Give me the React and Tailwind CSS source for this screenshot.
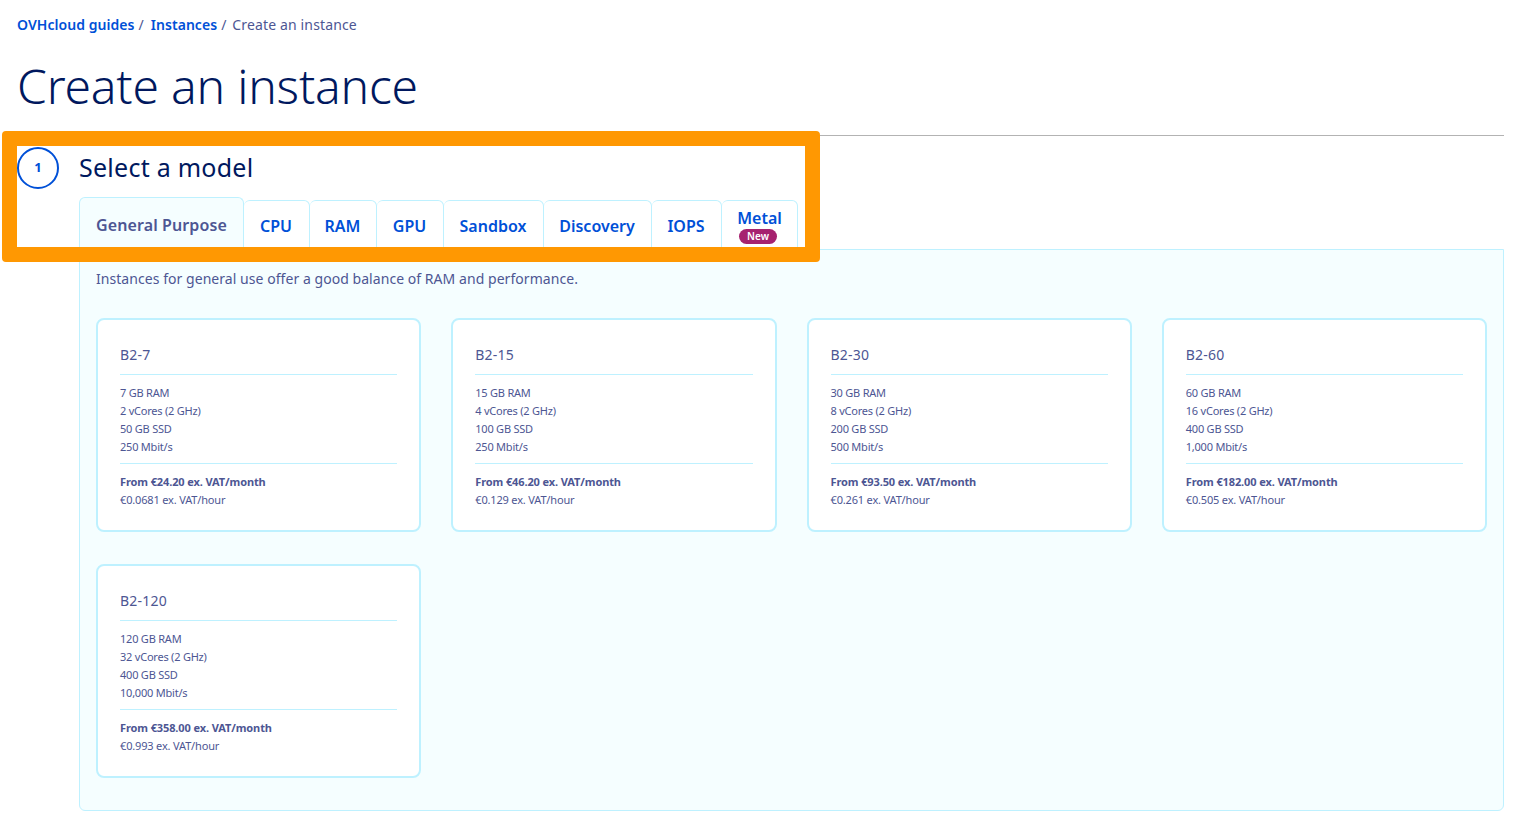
const font = { fontFamily: '"Noto Sans", "Lato", sans-serif' };

const cards = [
  ["B2-7", "7 GB RAM", "2 vCores (2 GHz)", "50 GB SSD", "250 Mbit/s", "From €24.20 ex. VAT/month", "€0.0681 ex. VAT/hour"],
  ["B2-15", "15 GB RAM", "4 vCores (2 GHz)", "100 GB SSD", "250 Mbit/s", "From €46.20 ex. VAT/month", "€0.129 ex. VAT/hour"],
  ["B2-30", "30 GB RAM", "8 vCores (2 GHz)", "200 GB SSD", "500 Mbit/s", "From €93.50 ex. VAT/month", "€0.261 ex. VAT/hour"],
  ["B2-60", "60 GB RAM", "16 vCores (2 GHz)", "400 GB SSD", "1,000 Mbit/s", "From €182.00 ex. VAT/month", "€0.505 ex. VAT/hour"],
  ["B2-120", "120 GB RAM", "32 vCores (2 GHz)", "400 GB SSD", "10,000 Mbit/s", "From €358.00 ex. VAT/month", "€0.993 ex. VAT/hour"],
];

const tabs = [
  ["CPU", "w-[66px]"],
  ["RAM", "w-[67px]"],
  ["GPU", "w-[67px]"],
  ["Sandbox", "w-[100px]"],
  ["Discovery", "w-[108px]"],
  ["IOPS", "w-[70px]"],
];

function Card({ c }) {
  return (
    <div className="h-[214px] rounded-lg border-2 border-[#bef1ff] bg-white px-[22px] pt-[22px] text-[#4d5693]">
      <div className="h-[33px] border-b border-[#bef1ff] text-[14px] leading-[26px] tracking-[0.2px]">{c[0]}</div>
      <div className="h-[89px] border-b border-[#bef1ff] pt-[9px] text-[11px] leading-[18px] tracking-[-0.02em]">
        <div>{c[1]}</div>
        <div>{c[2]}</div>
        <div>{c[3]}</div>
        <div>{c[4]}</div>
      </div>
      <div className="pt-[9px] text-[11px] leading-[18px]">
        <div className="font-bold tracking-[-0.01em]">{c[5]}</div>
        <div className="tracking-[-0.015em]">{c[6]}</div>
      </div>
    </div>
  );
}

export default function App() {
  return (
    <div className="relative h-[825px] overflow-hidden bg-white pl-[17px] pr-[18px]" style={font}>
      <nav className="flex h-[50px] items-start pt-[14px] text-[14px] leading-[22px]">
        <a className="font-semibold tracking-[0.05px] text-[#0050d7]">OVHcloud guides</a>
        <span className="ml-[4px] mr-[7px] text-[#4d5693]">/</span>
        <a className="font-semibold tracking-[0.05px] text-[#0050d7]">Instances</a>
        <span className="ml-[4px] mr-[6px] text-[#4d5693]">/</span>
        <span className="tracking-[0.14px] text-[#4d5693]">Create an instance</span>
      </nav>
      <h1 className="h-[85px] text-[48px] leading-[72px] font-light tracking-[-0.2px] text-[#00185e]">Create an instance</h1>
      <div className="border-t border-[#b3b3b3]" />
      <div className="flex h-[61px] items-start pt-[11px]">
        <div className="flex h-[42px] w-[42px] items-center justify-center rounded-full border-2 border-[#0050d7] text-[13px] font-bold text-[#0050d7]">1</div>
        <h2 className="ml-[20px] text-[25px] leading-[40px] tracking-[0.25px] text-[#00185e]">Select a model</h2>
      </div>
      <div className="ml-[62px] flex h-[52px] items-end">
        <div className="-mb-px flex h-[53px] w-[165px] items-start justify-center rounded-t-md border border-b-0 border-[#bef1ff] bg-[#f5feff] pt-[15px] text-[16px] leading-[24px] font-semibold tracking-[0.1px] text-[#4d5693]">General Purpose</div>
        {tabs.map(([t, w]) => (
          <div key={t} className={`flex h-[49px] items-start justify-center rounded-t-md border border-l-0 border-[#bef1ff] bg-white pr-px pt-[13px] text-[16px] leading-[24px] font-semibold text-[#0050d7] ${w}`}>{t}</div>
        ))}
        <div className="flex h-[49px] w-[76px] flex-col items-center rounded-t-md border border-l-0 border-[#bef1ff] bg-white pt-[6px] text-[16px] leading-[24px] font-semibold text-[#0050d7]">
          <span className="leading-[22px]">Metal</span>
          <span className="mr-[3px] rounded-full bg-[#a6226f] px-[8px] text-[10px] leading-[15px] font-semibold text-white">New</span>
        </div>
      </div>
      <section className="ml-[62px] h-[562px] rounded-b-md border border-[#bef1ff] bg-[#f5feff] px-[16px] pt-[17px]">
        <p className="text-[14px] leading-[24px] tracking-[0.05px] text-[#4d5693]">Instances for general use offer a good balance of RAM and performance.</p>
        <div className="mt-[27px] grid grid-cols-4 gap-x-[30px] gap-y-[32px]">
          {cards.map((c) => (
            <Card key={c[0]} c={c} />
          ))}
        </div>
      </section>
      <div className="absolute left-[2px] top-[131px] h-[131px] w-[818px] rounded-[4px] border-[15px] border-[#ff9802]" />
    </div>
  );
}
